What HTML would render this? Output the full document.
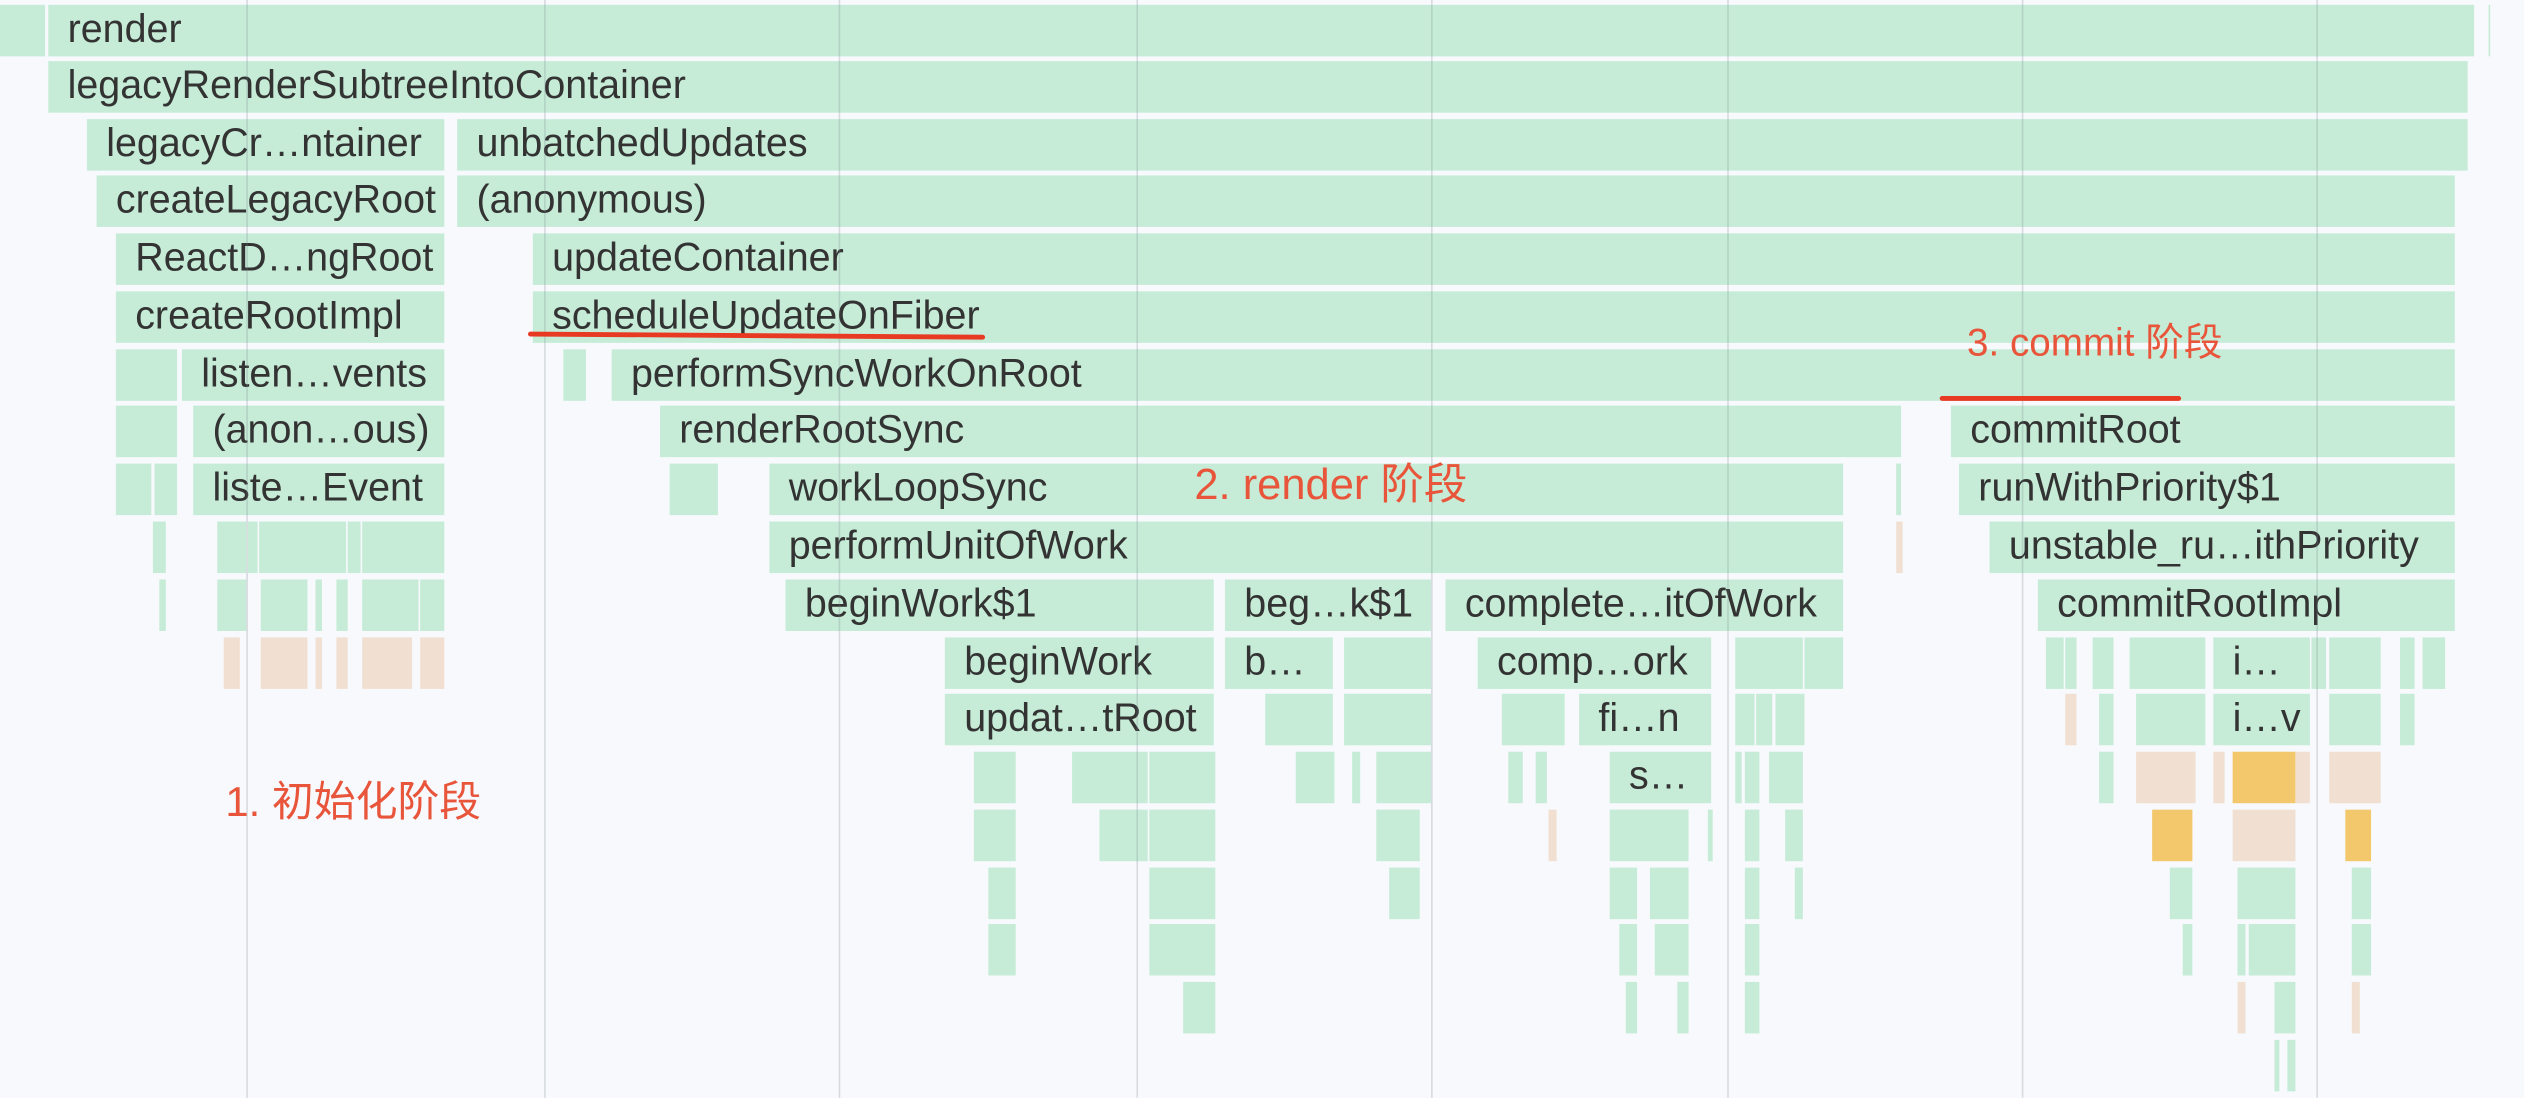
<!DOCTYPE html>
<html><head><meta charset="utf-8"><style>
html,body{margin:0;padding:0;background:#f7f9fd;overflow:hidden;width:2524px;height:1098px}
#w{position:absolute;left:0;top:0;width:1568px;height:682px;transform:scale(1.60969);transform-origin:0 0}
.b{position:absolute;height:32px;background:#c6ecd7;font:24.5px/32px "Liberation Sans",sans-serif;color:#333;padding-left:12px;box-sizing:border-box;white-space:nowrap;overflow:hidden}
.p{background:#f1e0d2}.y{background:#f3c76b}
.g{position:absolute;top:0;width:1px;height:682px;background:rgba(120,130,140,.25);z-index:2}
.a{position:absolute;color:#e8553a;font:26px "Liberation Sans","Noto Sans CJK SC",sans-serif;z-index:3;white-space:nowrap}
.u{position:absolute;height:3px;background:#e83a22;border-radius:2px;z-index:3}
</style></head><body><div id="w">
<div class="g" style="left:153px"></div><div class="g" style="left:338px"></div><div class="g" style="left:521px"></div><div class="g" style="left:706px"></div><div class="g" style="left:889px"></div><div class="g" style="left:1073px"></div><div class="g" style="left:1256px"></div><div class="g" style="left:1439px"></div>
<div class="b" style="top:2.5px;left:0;width:28px"></div>
<div class="b" style="top:2.5px;left:30px;width:1507px">render</div>
<div class="b" style="top:2.5px;left:1546px;width:1px;padding:0"></div>
<div class="b" style="top:38px;left:30px;width:1503px">legacyRenderSubtreeIntoContainer</div>
<div class="b" style="top:73.5px;left:54px;width:222px">legacyCr…ntainer</div>
<div class="b" style="top:73.5px;left:284px;width:1249px">unbatchedUpdates</div>
<div class="b" style="top:109px;left:60px;width:216px">createLegacyRoot</div>
<div class="b" style="top:109px;left:284px;width:1241px">(anonymous)</div>
<div class="b" style="top:145px;left:72px;width:204px">ReactD…ngRoot</div>
<div class="b" style="top:145px;left:331px;width:1194px">updateContainer</div>
<div class="b" style="top:181px;left:72px;width:204px">createRootImpl</div>
<div class="b" style="top:181px;left:331px;width:1194px">scheduleUpdateOnFiber</div>
<div class="b" style="top:216.5px;left:72px;width:38px"></div>
<div class="b" style="top:216.5px;left:113px;width:163px">listen…vents</div>
<div class="b" style="top:216.5px;left:350px;width:14px"></div>
<div class="b" style="top:216.5px;left:380px;width:1145px">performSyncWorkOnRoot</div>
<div class="b" style="top:252px;left:72px;width:38px"></div>
<div class="b" style="top:252px;left:120px;width:156px">(anon…ous)</div>
<div class="b" style="top:252px;left:410px;width:771px">renderRootSync</div>
<div class="b" style="top:252px;left:1212px;width:313px">commitRoot</div>
<div class="b" style="top:288px;left:72px;width:22px"></div>
<div class="b" style="top:288px;left:96px;width:14px"></div>
<div class="b" style="top:288px;left:120px;width:156px">liste…Event</div>
<div class="b" style="top:288px;left:416px;width:30px"></div>
<div class="b" style="top:288px;left:478px;width:667px">workLoopSync</div>
<div class="b" style="top:288px;left:1178px;width:3px;padding:0"></div>
<div class="b" style="top:288px;left:1217px;width:308px">runWithPriority$1</div>
<div class="b" style="top:324px;left:95px;width:8px;padding:0"></div>
<div class="b" style="top:324px;left:135px;width:18px;padding:0"></div>
<div class="b" style="top:324px;left:154px;width:6px;padding:0"></div>
<div class="b" style="top:324px;left:161px;width:54px;padding:0"></div>
<div class="b" style="top:324px;left:216px;width:8px;padding:0"></div>
<div class="b" style="top:324px;left:225px;width:51px;padding:0"></div>
<div class="b" style="top:324px;left:478px;width:667px">performUnitOfWork</div>
<div class="b p" style="top:324px;left:1178px;width:4px;padding:0"></div>
<div class="b" style="top:324px;left:1236px;width:289px">unstable_ru…ithPriority</div>
<div class="b" style="top:360px;left:99px;width:4px;padding:0"></div>
<div class="b" style="top:360px;left:135px;width:18px;padding:0"></div>
<div class="b" style="top:360px;left:162px;width:29px;padding:0"></div>
<div class="b" style="top:360px;left:196px;width:4px;padding:0"></div>
<div class="b" style="top:360px;left:209px;width:7px;padding:0"></div>
<div class="b" style="top:360px;left:225px;width:35px;padding:0"></div>
<div class="b" style="top:360px;left:261px;width:15px;padding:0"></div>
<div class="b" style="top:360px;left:488px;width:266px">beginWork$1</div>
<div class="b" style="top:360px;left:761px;width:128px">beg…k$1</div>
<div class="b" style="top:360px;left:898px;width:247px">complete…itOfWork</div>
<div class="b" style="top:360px;left:1266px;width:259px">commitRootImpl</div>
<div class="b p" style="top:396px;left:139px;width:10px;padding:0"></div>
<div class="b p" style="top:396px;left:162px;width:29px;padding:0"></div>
<div class="b p" style="top:396px;left:196px;width:4px;padding:0"></div>
<div class="b p" style="top:396px;left:209px;width:7px;padding:0"></div>
<div class="b p" style="top:396px;left:225px;width:31px;padding:0"></div>
<div class="b p" style="top:396px;left:261px;width:15px;padding:0"></div>
<div class="b" style="top:396px;left:587px;width:167px">beginWork</div>
<div class="b" style="top:396px;left:761px;width:67px">b…</div>
<div class="b" style="top:396px;left:835px;width:54px"></div>
<div class="b" style="top:396px;left:918px;width:145px">comp…ork</div>
<div class="b" style="top:396px;left:1078px;width:42px;padding:0"></div>
<div class="b" style="top:396px;left:1121px;width:24px;padding:0"></div>
<div class="b" style="top:396px;left:1271px;width:11px;padding:0"></div>
<div class="b" style="top:396px;left:1283px;width:7px;padding:0"></div>
<div class="b" style="top:396px;left:1300px;width:13px;padding:0"></div>
<div class="b" style="top:396px;left:1323px;width:47px;padding:0"></div>
<div class="b" style="top:396px;left:1375px;width:60px">i…</div>
<div class="b" style="top:396px;left:1436px;width:9px;padding:0"></div>
<div class="b" style="top:396px;left:1447px;width:32px;padding:0"></div>
<div class="b" style="top:396px;left:1491px;width:9px;padding:0"></div>
<div class="b" style="top:396px;left:1505px;width:14px;padding:0"></div>
<div class="b" style="top:431px;left:587px;width:167px">updat…tRoot</div>
<div class="b" style="top:431px;left:786px;width:42px"></div>
<div class="b" style="top:431px;left:835px;width:54px"></div>
<div class="b" style="top:431px;left:933px;width:39px"></div>
<div class="b" style="top:431px;left:981px;width:82px">fi…n</div>
<div class="b" style="top:431px;left:1078px;width:12px;padding:0"></div>
<div class="b" style="top:431px;left:1091px;width:10px;padding:0"></div>
<div class="b" style="top:431px;left:1103px;width:18px;padding:0"></div>
<div class="b p" style="top:431px;left:1283px;width:7px;padding:0"></div>
<div class="b" style="top:431px;left:1304px;width:9px;padding:0"></div>
<div class="b" style="top:431px;left:1327px;width:43px;padding:0"></div>
<div class="b" style="top:431px;left:1375px;width:60px">i…v</div>
<div class="b" style="top:431px;left:1447px;width:32px;padding:0"></div>
<div class="b" style="top:431px;left:1491px;width:9px;padding:0"></div>
<div class="b" style="top:467px;left:605px;width:26px;padding:0"></div>
<div class="b" style="top:467px;left:666px;width:47px;padding:0"></div>
<div class="b" style="top:467px;left:714px;width:41px;padding:0"></div>
<div class="b" style="top:467px;left:805px;width:24px;padding:0"></div>
<div class="b" style="top:467px;left:840px;width:5px;padding:0"></div>
<div class="b" style="top:467px;left:855px;width:34px;padding:0"></div>
<div class="b" style="top:467px;left:937px;width:9px;padding:0"></div>
<div class="b" style="top:467px;left:954px;width:7px;padding:0"></div>
<div class="b" style="top:467px;left:1000px;width:63px">s…</div>
<div class="b" style="top:467px;left:1078px;width:4px;padding:0"></div>
<div class="b" style="top:467px;left:1084px;width:9px;padding:0"></div>
<div class="b" style="top:467px;left:1099px;width:21px;padding:0"></div>
<div class="b" style="top:467px;left:1304px;width:9px;padding:0"></div>
<div class="b p" style="top:467px;left:1327px;width:37px;padding:0"></div>
<div class="b p" style="top:467px;left:1375px;width:7px;padding:0"></div>
<div class="b y" style="top:467px;left:1387px;width:39px;padding:0"></div>
<div class="b p" style="top:467px;left:1426px;width:9px;padding:0"></div>
<div class="b p" style="top:467px;left:1447px;width:32px;padding:0"></div>
<div class="b" style="top:503px;left:605px;width:26px;padding:0"></div>
<div class="b" style="top:503px;left:683px;width:30px;padding:0"></div>
<div class="b" style="top:503px;left:714px;width:41px;padding:0"></div>
<div class="b" style="top:503px;left:855px;width:27px;padding:0"></div>
<div class="b p" style="top:503px;left:962px;width:5px;padding:0"></div>
<div class="b" style="top:503px;left:1000px;width:49px;padding:0"></div>
<div class="b" style="top:503px;left:1061px;width:3px;padding:0"></div>
<div class="b" style="top:503px;left:1084px;width:9px;padding:0"></div>
<div class="b" style="top:503px;left:1109px;width:11px;padding:0"></div>
<div class="b y" style="top:503px;left:1337px;width:25px;padding:0"></div>
<div class="b p" style="top:503px;left:1387px;width:39px;padding:0"></div>
<div class="b y" style="top:503px;left:1457px;width:16px;padding:0"></div>
<div class="b" style="top:538.5px;left:614px;width:17px;padding:0"></div>
<div class="b" style="top:538.5px;left:714px;width:41px;padding:0"></div>
<div class="b" style="top:538.5px;left:863px;width:19px;padding:0"></div>
<div class="b" style="top:538.5px;left:1000px;width:17px;padding:0"></div>
<div class="b" style="top:538.5px;left:1025px;width:24px;padding:0"></div>
<div class="b" style="top:538.5px;left:1084px;width:9px;padding:0"></div>
<div class="b" style="top:538.5px;left:1115px;width:5px;padding:0"></div>
<div class="b" style="top:538.5px;left:1348px;width:14px;padding:0"></div>
<div class="b" style="top:538.5px;left:1390px;width:36px;padding:0"></div>
<div class="b" style="top:538.5px;left:1461px;width:12px;padding:0"></div>
<div class="b" style="top:574px;left:614px;width:17px;padding:0"></div>
<div class="b" style="top:574px;left:714px;width:41px;padding:0"></div>
<div class="b" style="top:574px;left:1006px;width:11px;padding:0"></div>
<div class="b" style="top:574px;left:1028px;width:21px;padding:0"></div>
<div class="b" style="top:574px;left:1084px;width:9px;padding:0"></div>
<div class="b" style="top:574px;left:1356px;width:6px;padding:0"></div>
<div class="b" style="top:574px;left:1390px;width:5px;padding:0"></div>
<div class="b" style="top:574px;left:1397px;width:29px;padding:0"></div>
<div class="b" style="top:574px;left:1461px;width:12px;padding:0"></div>
<div class="b" style="top:610px;left:735px;width:20px;padding:0"></div>
<div class="b" style="top:610px;left:1010px;width:7px;padding:0"></div>
<div class="b" style="top:610px;left:1042px;width:7px;padding:0"></div>
<div class="b" style="top:610px;left:1084px;width:9px;padding:0"></div>
<div class="b p" style="top:610px;left:1390px;width:5px;padding:0"></div>
<div class="b" style="top:610px;left:1413px;width:13px;padding:0"></div>
<div class="b p" style="top:610px;left:1461px;width:5px;padding:0"></div>
<div class="b" style="top:646px;left:1413px;width:3px;padding:0"></div>
<div class="b" style="top:646px;left:1421px;width:5px;padding:0"></div>
<div class="a" style="left:140px;top:478px">1. 初始化阶段</div>
<div class="a" style="left:742px;top:279px;font-size:27px">2. render 阶段</div>
<div class="a" style="left:1222px;top:193px;font-size:24px">3. commit 阶段</div>
<div class="u" style="left:328px;top:207px;width:284px;transform:rotate(0.4deg)"></div>
<div class="u" style="left:1205px;top:246px;width:150px"></div>
</div></body></html>
